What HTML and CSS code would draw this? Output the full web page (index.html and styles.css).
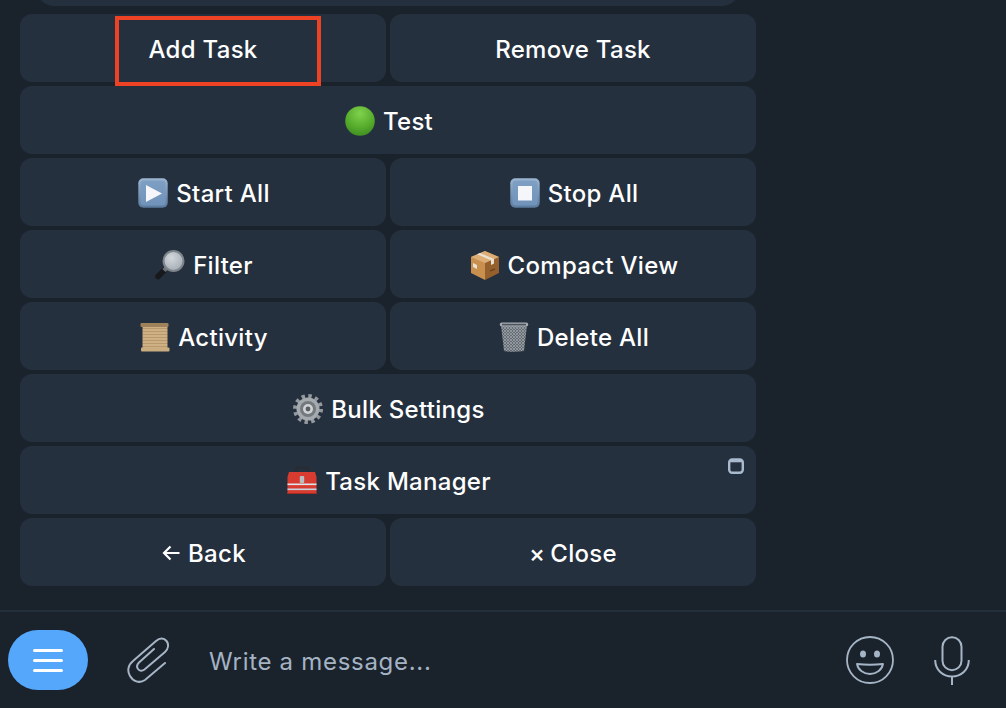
FILE: index.html
```html
<!DOCTYPE html>
<html lang="en">

<head>
    <meta charset="UTF-8">
    <meta name="viewport" content="width=device-width, initial-scale=1.0">
    <title>Task Manager</title>
    <link rel="stylesheet" href="styles.css">
</head>

<body>
    <div class="chat">
        <div class="message-tail"></div>

        <div class="keyboard">
            <div class="key-row">
                <button class="key">Add Task<span class="highlight"></span></button>
                <button class="key">Remove Task</button>
            </div>
            <div class="key-row">
                <button class="key">
                    <svg class="emoji" viewBox="0 0 30 30">
                        <defs>
                            <radialGradient id="greenBall" cx="0.5" cy="0.25" r="0.8">
                                <stop offset="0" stop-color="#7fd24c" />
                                <stop offset="0.6" stop-color="#56ab2c" />
                                <stop offset="1" stop-color="#3d8a20" />
                            </radialGradient>
                        </defs>
                        <circle cx="15" cy="15" r="14.8" fill="url(#greenBall)" />
                    </svg>
                    Test
                </button>
            </div>
            <div class="key-row">
                <button class="key">
                    <svg class="emoji" viewBox="0 0 30 30">
                        <defs>
                            <linearGradient id="tileBlue" x1="0" y1="0" x2="0" y2="1">
                                <stop offset="0" stop-color="#9db6d2" />
                                <stop offset="1" stop-color="#5a7a9e" />
                            </linearGradient>
                            <linearGradient id="tileInner" x1="0" y1="0" x2="0" y2="1">
                                <stop offset="0" stop-color="#7f9fc4" />
                                <stop offset="1" stop-color="#7193ba" />
                            </linearGradient>
                        </defs>
                        <rect x="0.3" y="0.3" width="29.4" height="29.4" rx="5" fill="url(#tileBlue)" />
                        <rect x="2.5" y="2.5" width="25" height="25" rx="3.5" fill="url(#tileInner)" />
                        <path d="M8 7 L24 15.5 L8 24 Z" fill="#f4f6f9" />
                    </svg>
                    Start All
                </button>
                <button class="key">
                    <svg class="emoji" viewBox="0 0 30 30">
                        <rect x="0.3" y="0.3" width="29.4" height="29.4" rx="5" fill="url(#tileBlue)" />
                        <rect x="2.5" y="2.5" width="25" height="25" rx="3.5" fill="url(#tileInner)" />
                        <rect x="8" y="8" width="14" height="14.5" fill="#f4f6f9" />
                    </svg>
                    Stop All
                </button>
            </div>
            <div class="key-row">
                <button class="key">
                    <svg class="emoji" viewBox="0 0 30 30">
                        <defs>
                            <radialGradient id="lens" cx="0.4" cy="0.35" r="0.7">
                                <stop offset="0" stop-color="#d2d7dc" />
                                <stop offset="1" stop-color="#a3abb3" />
                            </radialGradient>
                        </defs>
                        <path d="M9 20.5 L3 26.5" stroke="#17191c" stroke-width="5.5" stroke-linecap="round" />
                        <path d="M11.5 18 L9 20.5" stroke="#6d7378" stroke-width="4.5" />
                        <circle cx="18.5" cy="11" r="10" fill="url(#lens)" stroke="#7d848a" stroke-width="2" />
                    </svg>
                    Filter
                </button>
                <button class="key">
                    <svg class="emoji" viewBox="0 0 30 30">
                        <path d="M15 1 L29 7 L29 23 L15 30 Z" fill="#96602c" />
                        <path d="M15 1 L1 7 L1 23 L15 30 Z" fill="#c98f4f" />
                        <path d="M1 7 L15 1 L29 7 L15 13 Z" fill="#dcae75" />
                        <path d="M7 4.3 L21 10.3 L21 15 L24 13.5 L24 9 L10 3 Z" fill="#e9e2d3" />
                        <path d="M3 13 L7 15 L7 19 L3 17 Z" fill="#e9e2d3" />
                        <path d="M20 21 L25 19" stroke="#6e4520" stroke-width="1.5" />
                    </svg>
                    Compact View
                </button>
            </div>
            <div class="key-row">
                <button class="key">
                    <svg class="emoji" viewBox="0 0 30 30">
                        <defs>
                            <pattern id="scrollLines" width="30" height="3" patternUnits="userSpaceOnUse">
                                <rect width="30" height="3" fill="#cdb084" />
                                <rect width="30" height="1" fill="#b9986c" />
                            </pattern>
                        </defs>
                        <rect x="2.5" y="2" width="25" height="26" fill="url(#scrollLines)" />
                        <rect x="0.5" y="1" width="28" height="4" rx="1" fill="#a0825a" />
                        <rect x="1" y="25.5" width="28.5" height="4" rx="1" fill="#c9ac80" />
                    </svg>
                    Activity
                </button>
                <button class="key">
                    <svg class="emoji" viewBox="0 0 30 30">
                        <defs>
                            <pattern id="binMesh" width="3" height="3" patternUnits="userSpaceOnUse">
                                <rect width="3" height="3" fill="#656c73" />
                                <path d="M0 0 L3 3 M3 0 L0 3" stroke="#a0a7ad" stroke-width="0.7" />
                            </pattern>
                        </defs>
                        <path d="M2 3 L28 3 L25 29 Q15 30.5 5 29 Z" fill="url(#binMesh)" />
                        <rect x="0.8" y="0.5" width="28.4" height="4" rx="1.8" fill="#a4abb2" />
                        <rect x="3" y="1.8" width="24" height="1.6" fill="#4d5359" />
                    </svg>
                    Delete All
                </button>
            </div>
            <div class="key-row">
                <button class="key">
                    <svg class="emoji" viewBox="0 0 30 30">
                        <circle cx="15" cy="15" r="13" fill="none" stroke="#94999e" stroke-width="4" stroke-dasharray="3.4 3.4" />
                        <circle cx="15" cy="15" r="11.5" fill="#a5aaaf" />
                        <circle cx="15" cy="15" r="8" fill="#74797e" />
                        <circle cx="15" cy="15" r="5" fill="#d0d3d6" />
                        <circle cx="15" cy="15" r="2.4" fill="#5a5e63" />
                    </svg>
                    Bulk Settings
                </button>
            </div>
            <div class="key-row">
                <button class="key">
                    <svg class="emoji" viewBox="0 0 30 30">
                        <path d="M9 7 V3 Q9 1.5 11 1.5 H19 Q21 1.5 21 3 V7" fill="none" stroke="#2b2b2e" stroke-width="1.6" />
                        <path d="M2 6 H28 L29.5 11 V28 H0.5 V11 Z" fill="#d83c31" />
                        <rect x="0.5" y="27" width="29" height="1" fill="#a82a24" />
                        <rect x="0.5" y="17.5" width="29" height="1.6" fill="#dfe6ee" />
                        <rect x="0.5" y="22.5" width="29" height="1.6" fill="#c9d3e0" />
                        <rect x="12.8" y="10" width="4.4" height="7" rx="1" fill="#b9bdc2" />
                    </svg>
                    Task Manager
                    <svg class="corner-icon" viewBox="0 0 16 16">
                        <rect x="1.2" y="1.5" width="13.6" height="13.3" rx="3" fill="none" stroke="#a9bacd" stroke-width="2.4" />
                        <path d="M2 3 H14" stroke="#a9bacd" stroke-width="2.6" />
                    </svg>
                </button>
            </div>
            <div class="key-row">
                <button class="key">
                    <svg class="arrow" viewBox="0 0 18 16">
                        <path d="M17.5 8 H2 M8.5 1.5 L2 8 L8.5 14.5" fill="none" stroke="#fff" stroke-width="2.2" />
                    </svg>
                    Back
                </button>
                <button class="key"><span class="close-mark">×</span> Close</button>
            </div>
        </div>

        <div class="composer">
            <button class="menu-button">
                <svg class="menu-lines" viewBox="0 0 30 24">
                    <path d="M1.5 2.5 H28.5 M1.5 12.5 H28.5 M1.5 22.5 H28.5" stroke="#fff" stroke-width="3" stroke-linecap="round" />
                </svg>
            </button>
            <svg class="clip-icon" viewBox="0 0 42 46">
                <path d="M38 26 L18 43 C12 47 6 44 3 39 C0 34 1 28 6 24 L29 4 C33 0.5 37 1 39.5 4 C42 7 41.5 12 38 15 L17.5 32.5 C15 34.5 12.5 34 11 32 C9.5 30 10 27.5 12 25.5 L27 12" fill="none" stroke="#a6b5c5" stroke-width="2" stroke-linecap="round" />
            </svg>
            <div class="message-input">Write a message...</div>
            <svg class="smile-icon" viewBox="0 0 48 48">
                <circle cx="24" cy="24" r="23" fill="none" stroke="#a6b5c5" stroke-width="1.8" />
                <ellipse cx="17" cy="18" rx="3" ry="3.6" fill="#a6b5c5" />
                <ellipse cx="31" cy="18" rx="3" ry="3.6" fill="#a6b5c5" />
                <path d="M11 28 Q24 29.5 37 28 C36 34 30 38 24 38 C18 38 12 34 11 28 Z" fill="none" stroke="#a6b5c5" stroke-width="1.8" stroke-linejoin="round" />
            </svg>
            <svg class="mic-icon" viewBox="0 0 36 49">
                <rect x="8.5" y="1.2" width="19" height="33" rx="9.5" fill="none" stroke="#a6b5c5" stroke-width="2" />
                <path d="M1.2 24 C1.2 34 9 40.5 18 40.5 C27 40.5 34.8 34 34.8 24 M18 40.5 V49" fill="none" stroke="#a6b5c5" stroke-width="2" />
            </svg>
        </div>
    </div>
</body>

</html>
```

FILE: styles.css
```css
* {
    margin: 0;
    padding: 0;
    box-sizing: border-box;
}

body {
    font-family: 'Inter', 'Liberation Sans', sans-serif;
    background: #1a222c;
    height: 708px;
    overflow: hidden;
}

.chat {
    height: 708px;
    display: flex;
    flex-direction: column;
}

.message-tail {
    width: 706px;
    height: 30px;
    margin: -24px 0 0 35px;
    background: #25303e;
    border-radius: 0 0 20px 20px;
}

.keyboard {
    width: 736px;
    margin: 8px 0 0 20px;
    display: flex;
    flex-direction: column;
    gap: 4px;
}

.key-row {
    display: flex;
    gap: 4px;
}

.key {
    position: relative;
    flex: 1;
    height: 68px;
    padding-top: 2px;
    display: flex;
    align-items: center;
    justify-content: center;
    gap: 8px;
    background: #25303e;
    color: #fff;
    border: none;
    border-radius: 12px;
    font-family: inherit;
    font-size: 24px;
    font-weight: 500;
    letter-spacing: 0.3px;
}

.emoji {
    width: 30px;
    height: 30px;
    margin-left: 2px;
    flex-shrink: 0;
}

.arrow {
    width: 18px;
    height: 16px;
    margin-left: 2px;
}

.close-mark {
    margin-right: -3px;
}

.highlight {
    position: absolute;
    left: 95px;
    top: 2px;
    width: 206px;
    height: 70px;
    border: 4px solid #ee4224;
}

.corner-icon {
    position: absolute;
    top: 12px;
    right: 12px;
    width: 16px;
    height: 16px;
}

.composer {
    flex: 1;
    margin-top: 24px;
    border-top: 2px solid #242f3c;
    display: flex;
    align-items: center;
    padding: 0 36px 0 8px;
}

.menu-button {
    width: 80px;
    height: 60px;
    display: flex;
    align-items: center;
    justify-content: center;
    background: #54a7fb;
    border: none;
    border-radius: 30px;
}

.menu-lines {
    width: 30px;
    height: 24px;
}

.clip-icon {
    width: 42px;
    height: 46px;
    margin-left: 39px;
}

.message-input {
    flex: 1;
    margin-left: 40px;
    padding-top: 2px;
    color: #a4b3c3;
    font-size: 24px;
    letter-spacing: 0.7px;
}

.smile-icon {
    width: 48px;
    height: 48px;
}

.mic-icon {
    width: 36px;
    height: 49px;
    margin-left: 40px;
}
```
